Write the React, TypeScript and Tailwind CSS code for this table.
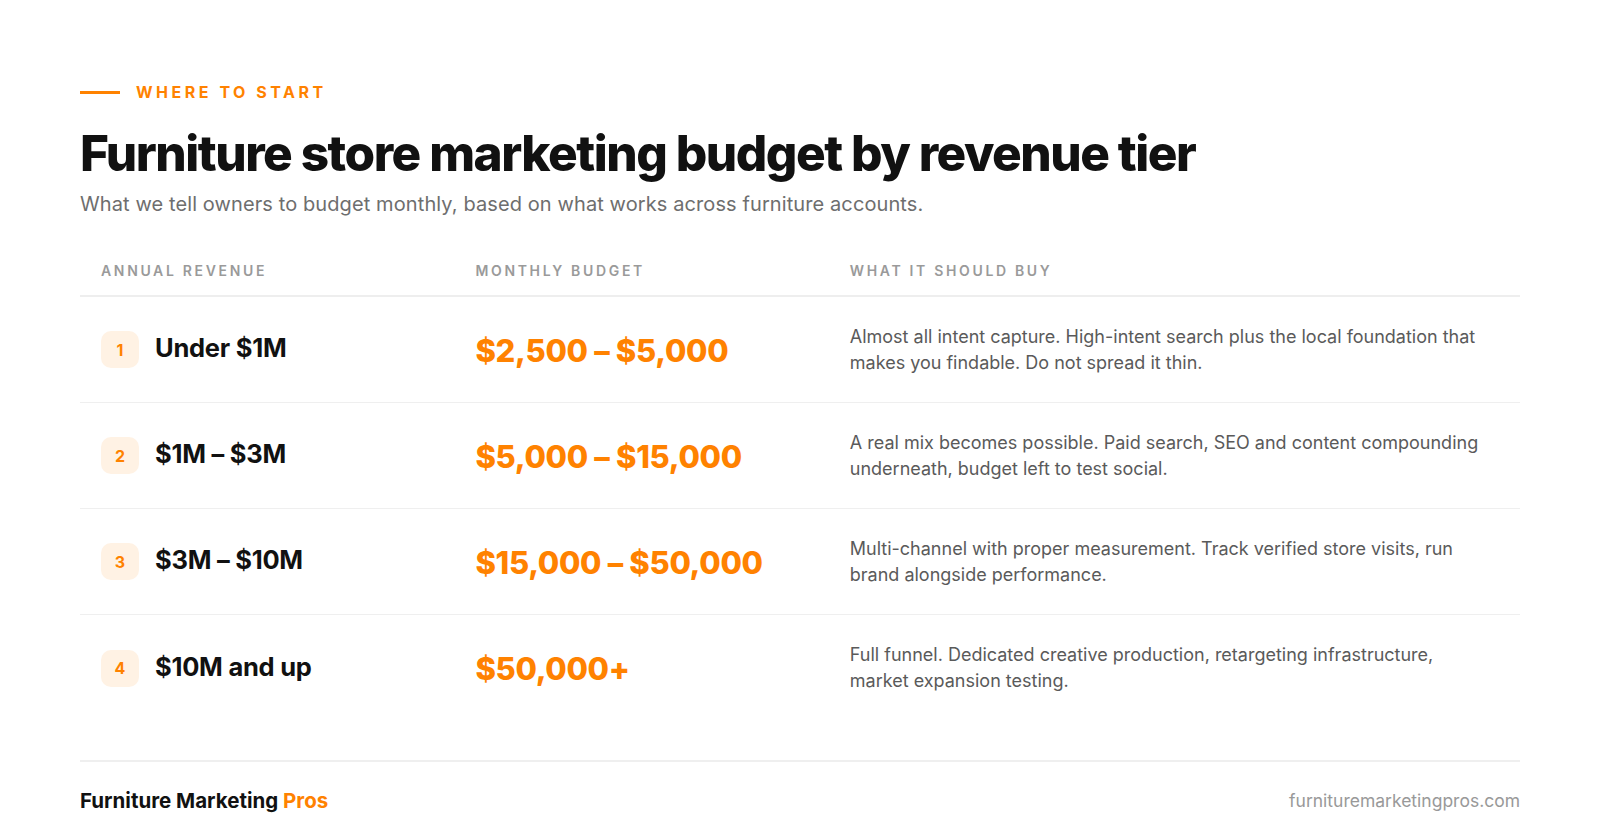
const tiers = [
  {
    n: 1,
    revenue: "Under $1M",
    budget: "$2,500 – $5,000",
    buys: "Almost all intent capture. High-intent search plus the local foundation that makes you findable. Do not spread it thin.",
  },
  {
    n: 2,
    revenue: "$1M – $3M",
    budget: "$5,000 – $15,000",
    buys: "A real mix becomes possible. Paid search, SEO and content compounding underneath, budget left to test social.",
  },
  {
    n: 3,
    revenue: "$3M – $10M",
    budget: "$15,000 – $50,000",
    buys: "Multi-channel with proper measurement. Track verified store visits, run brand alongside performance.",
  },
  {
    n: 4,
    revenue: "$10M and up",
    budget: "$50,000+",
    buys: "Full funnel. Dedicated creative production, retargeting infrastructure, market expansion testing.",
  },
];

const App = () => {
  return (
    <div className="min-h-screen bg-white px-20 pt-[80px] font-['Inter','Liberation_Sans',sans-serif] text-[#111]">
      <div className="flex items-center gap-4">
        <span className="h-[3px] w-10 bg-[#ff8200]" />
        <span className="text-[16px] font-bold uppercase tracking-[0.22em] text-[#ff8200]">Where to start</span>
      </div>

      <h1 className="mt-[19px] text-[49.5px] font-extrabold leading-[60px] tracking-[-0.03em] text-[#111]">
        Furniture store marketing budget by revenue tier
      </h1>
      <p className="mt-[6px] text-[20px] leading-[30px] tracking-[0.005em] text-[#6e6e6e]">
        What we tell owners to budget monthly, based on what works across furniture accounts.
      </p>

      <div className="mt-[41px]">
        <div className="grid grid-cols-[26%_26%_48%] border-b-2 border-[#eeeeee] pb-[14px] text-[14px] font-semibold uppercase tracking-[0.19em] text-[#9a9a9a]">
          <div className="pl-[21px]">Annual revenue</div>
          <div className="pl-[21px]">Monthly budget</div>
          <div className="pl-[21px]">What it should buy</div>
        </div>

        {tiers.map((t, i) => (
          <div
            key={t.n}
            className={`grid h-[106px] grid-cols-[26%_26%_48%] items-center ${i < tiers.length - 1 ? "border-b border-[#efefef]" : ""}`}
          >
            <div className="flex items-center gap-4 pl-[21px]">
              <span className="flex h-[37px] w-[38px] items-center justify-center rounded-[10px] bg-[#fff2e4] text-[16px] font-bold text-[#ff8200]">
                {t.n}
              </span>
              <span className="-mt-[2px] text-[25.5px] font-bold tracking-[-0.01em] text-[#111]">{t.revenue}</span>
            </div>
            <div className="pl-[21px] pt-[3px] text-[31px] font-extrabold tracking-[-0.01em] text-[#ff8200]">{t.budget}</div>
            <div className="pl-[21px] pr-[24px] text-[18px] leading-[26px] text-[#5a5a5a]">{t.buys}</div>
          </div>
        ))}
      </div>

      <div className="mt-[39px] flex items-center justify-between border-t-2 border-[#efefef] pt-[24px]">
        <div className="text-[20.5px] font-bold text-[#111]">
          Furniture Marketing <span className="text-[#ff8200]">Pros</span>
        </div>
        <div className="text-[17.5px] text-[#999]">furnituremarketingpros.com</div>
      </div>
    </div>
  );
};

export default App;
